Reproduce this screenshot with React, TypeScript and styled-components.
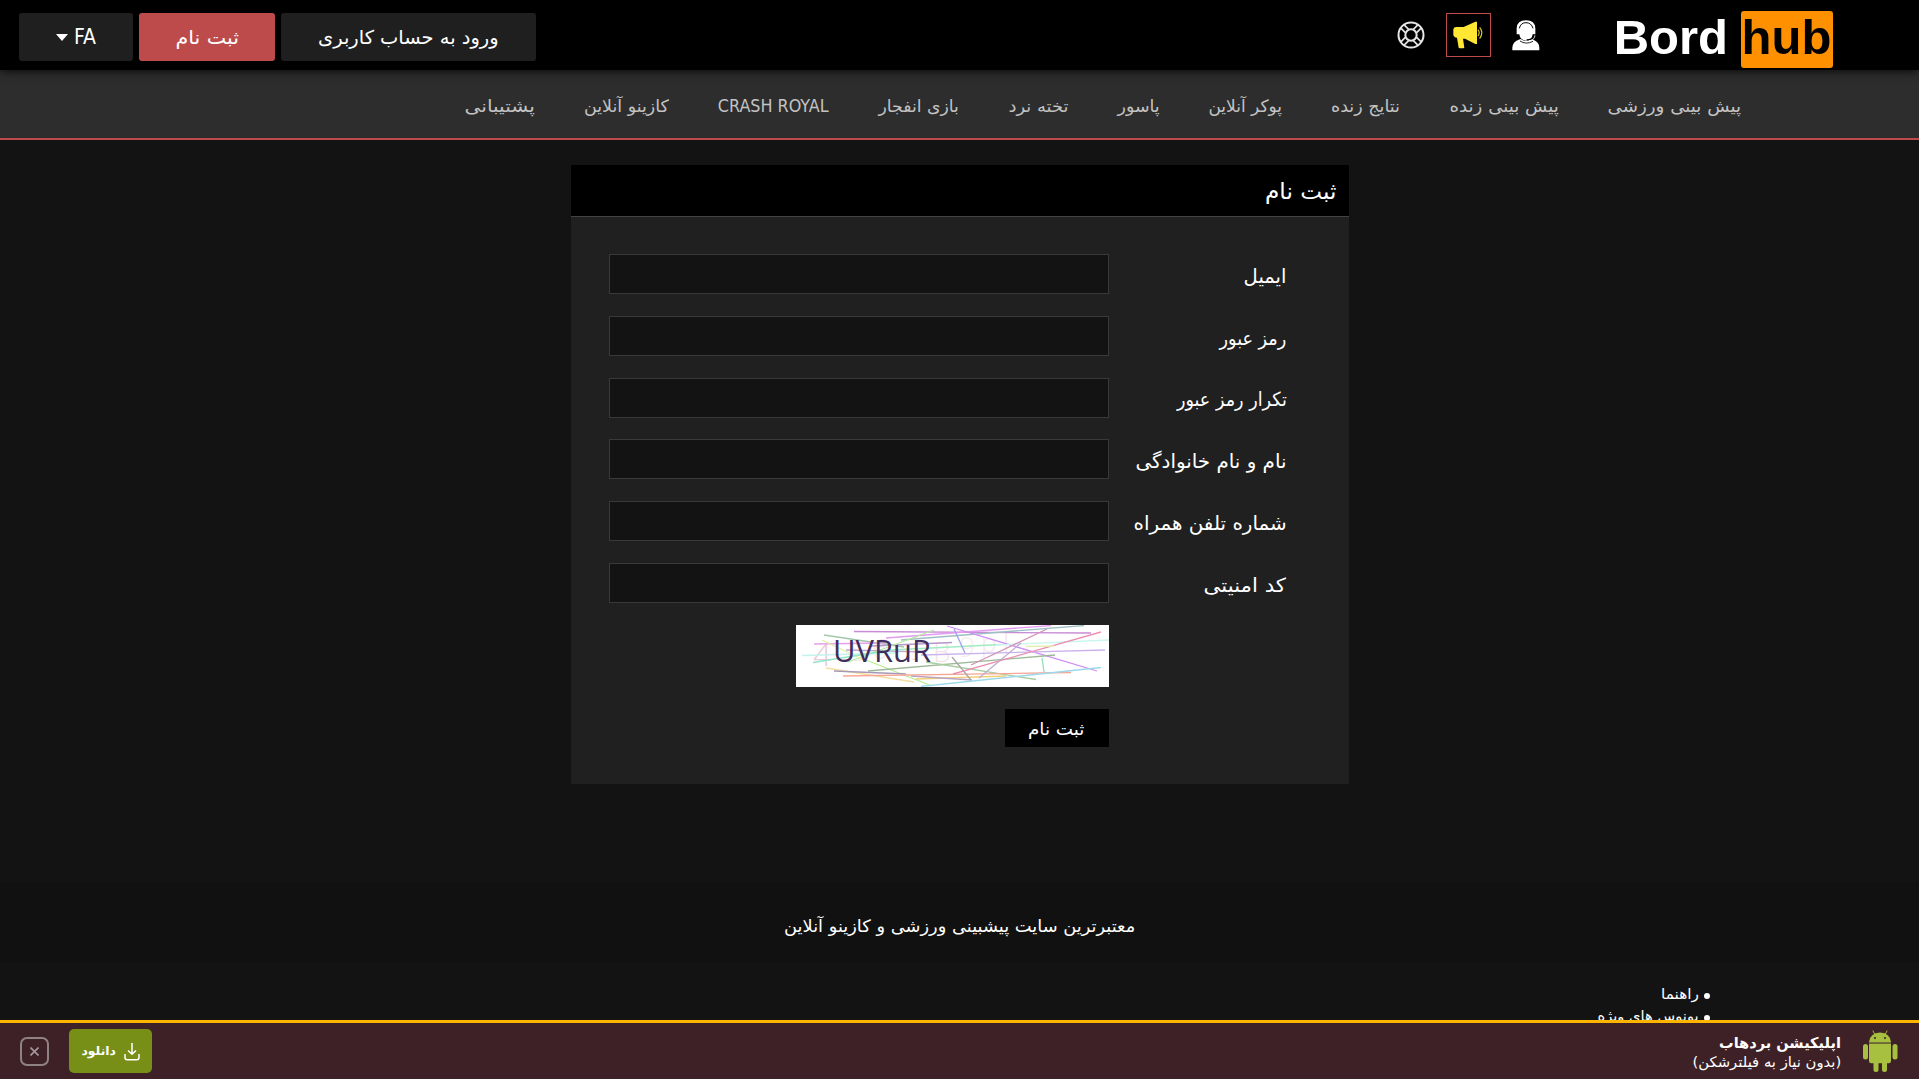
import React, { useLayoutEffect, useRef, useState } from 'react';
import styled, { createGlobalStyle } from 'styled-components';

const GlobalStyle = createGlobalStyle`
  * { box-sizing: border-box; }
  html, body { margin: 0; background: #131313; overflow: hidden; }
  body { font-family: 'DejaVu Sans', 'Noto Sans', sans-serif; color: #fff; }
  button, input { font-family: inherit; }
`;

const Page = styled.div`
  height: 1079px;
  overflow: hidden;
  display: flex;
  flex-direction: column;
`;

/* ---------- fitted text ---------- */

const FitBox = styled.span<{ $w: number; $size: number; $bold?: boolean; $dy?: number }>`
  display: inline-flex;
  justify-content: center;
  flex: none;
  width: ${p => p.$w}px;
  margin-top: ${p => p.$dy ?? 0}px;
  font-size: ${p => p.$size}px;
  font-weight: ${p => (p.$bold ? 700 : 400)};
  line-height: 1.35;
  white-space: nowrap;
`;
const FitInner = styled.span`
  flex: none;
  transform-origin: center;
`;

type FitProps = { w: number; size: number; bold?: boolean; dy?: number; children: string };

/* Keeps a label at a fixed width whatever the metrics of the installed font. */
function Fit({ w, size, bold, dy, children }: FitProps) {
  const ref = useRef<HTMLSpanElement>(null);
  const [ratio, setRatio] = useState(1);
  useLayoutEffect(() => {
    if (ref.current) setRatio(w / ref.current.offsetWidth);
  }, [w, size, children]);
  return (
    <FitBox $w={w} $size={size} $bold={bold} $dy={dy}>
      <FitInner ref={ref} style={{ transform: `scaleX(${ratio})` }}>{children}</FitInner>
    </FitBox>
  );
}

/* ---------- header ---------- */

const Header = styled.header`
  position: relative;
  z-index: 2;
  flex: none;
  height: 70px;
  padding: 0 86px 0 19px;
  display: flex;
  justify-content: space-between;
  background: #000;
  box-shadow: 0 0 10px #000;
`;
const HeaderStart = styled.div`
  display: flex;
  align-items: flex-start;
`;
const Logo = styled.a`
  display: flex;
  align-items: flex-start;
  gap: 13px;
  padding-top: 11px;
  font: 700 49px/52px 'Liberation Sans', sans-serif;
  direction: ltr;
`;
const LogoMark = styled.span`
  display: flex;
  justify-content: center;
  width: 92px;
  height: 57px;
  padding-right: 1px;
  border-radius: 3px;
  background: #ff9000;
  color: #000;
`;
const Icons = styled.div`
  display: flex;
  align-items: center;
  gap: 14px;
  height: 70px;
  margin-right: 67px;
`;
const IconLink = styled.a<{ $framed?: boolean }>`
  display: flex;
  align-items: center;
  justify-content: center;
  width: ${p => (p.$framed ? 45 : 42)}px;
  height: 44px;
  border: 1px solid ${p => (p.$framed ? '#bd4b4b' : 'transparent')};
`;
const Actions = styled.div`
  display: flex;
  gap: 6px;
  padding-top: 13px;
`;
const ActionButton = styled.button<{ $w: number; $accent?: boolean }>`
  display: flex;
  align-items: center;
  justify-content: center;
  gap: 6px;
  width: ${p => p.$w}px;
  height: 48px;
  padding: 0;
  border: 0;
  border-radius: 3px;
  color: #fff;
  background: ${p => (p.$accent ? '#bd4b4b' : '#1f1f1f')};
`;
const Lang = styled.span`
  margin-bottom: 1px;
  font: 21px/24px 'DejaVu Sans Condensed', 'DejaVu Sans', sans-serif;
  font-stretch: condensed;
`;
const Caret = styled.i`
  border: 6px solid transparent;
  border-top: 7px solid #fff;
  border-bottom: 0;
`;

const AgentIcon = () => (
  <svg width="28" height="31" viewBox="364 35 84 93">
    <path d="M365 126V118Q366 100 384 94L390 92Q407 104 421 92L428 94Q446 101 446 118V126Z" fill="#fff" />
    <path d="M378 78V60Q379 36 406 36Q433 36 434 60V78H426Q424 96 406 97Q388 96 386 78Z" fill="#fff" />
    <path d="M386 60Q390 43 406 43Q422 43 427 60" fill="none" stroke="#000" strokeWidth="3" />
    <path d="M430 79Q427 96 408 94" fill="none" stroke="#000" strokeWidth="3.5" />
    <path d="M433 81Q430 98 413 99" fill="none" stroke="#fff" strokeWidth="2.5" />
    <path d="M388 98Q406 110 427 99" fill="none" stroke="#000" strokeWidth="2.5" />
  </svg>
);
const HornIcon = () => (
  <svg width="31" height="29" viewBox="188 40 93 87">
    <path d="M189 65Q190 58 198 58H220L255 42H260V109H255L224 93H218L222 120L219 122H208L205 120L200 90Q190 89 189 81Z" fill="#ffe733" />
    <path d="M263 66Q270 75 263 85M268 59Q281 75 268 93" fill="none" stroke="#d9c62c" strokeWidth="3.5" />
  </svg>
);
const BuoyIcon = () => (
  <svg width="28" height="28" viewBox="-42 -42 84 84" fill="none" stroke="#e6e6e6">
    <circle r="37.5" strokeWidth="6" />
    <circle r="17" strokeWidth="6" />
    {[45, 135, 225, 315].map(a => (
      <path key={a} d="M16 -7H36M16 7H36" strokeWidth="5" transform={`rotate(${a})`} />
    ))}
  </svg>
);

/* ---------- navigation ---------- */

const Nav = styled.nav`
  flex: none;
  height: 70px;
  display: flex;
  align-items: center;
  gap: 49.1px;
  padding-right: 177.500px;
  background: #2d2d2d;
  border-bottom: 2px solid #bd4b4b;
  color: #c3c3c3;
`;
const Latin = styled.span`
  width: 112px;
  margin-top: 3px;
  font: 17.8px/24px 'DejaVu Sans Condensed', 'DejaVu Sans', sans-serif;
  font-stretch: condensed;
  white-space: nowrap;
  direction: ltr;
`;

const navItems = [
  { label: 'پیش بینی ورزشی', w: 134 },
  { label: 'پیش بینی زنده', w: 109 },
  { label: 'نتایج زنده', w: 69 },
  { label: 'پوکر آنلاین', w: 74 },
  { label: 'پاسور', w: 42 },
  { label: 'تخته نرد', w: 60 },
  { label: 'بازی انفجار', w: 80 },
  { label: 'CRASH ROYAL', w: 112, latin: true },
  { label: 'کازینو آنلاین', w: 85 },
  { label: 'پشتیبانی', w: 70 },
];

/* ---------- sign-up card ---------- */

const Card = styled.section`
  flex: none;
  align-self: center;
  width: 778px;
  height: 619px;
  margin-top: 25px;
  background: #202020;
`;
const CardTitle = styled.h1`
  display: flex;
  align-items: center;
  height: 52px;
  margin: 0;
  padding-right: 12px;
  background: #000;
  border-bottom: 1px solid #444;
`;
const Form = styled.form`
  display: flex;
  flex-direction: column;
  gap: 21.8px;
  padding: 37px 62px 0 38px;
`;
const Field = styled.label`
  display: grid;
  grid-template-columns: 178px 500px;
  align-items: center;
  height: 40px;
`;
const Input = styled.input`
  height: 40px;
  padding: 0 10px;
  border: 1px solid #393939;
  border-radius: 0;
  background: #131313;
  color: #fff;
  font-size: 16px;
  outline: none;
`;
const CaptchaFrame = styled.div`
  display: flex;
  width: 313px;
  height: 62px;
  margin-right: 178px;
  background: #fff;
`;
const Submit = styled.button`
  display: flex;
  align-items: center;
  justify-content: center;
  width: 104px;
  height: 38px;
  margin-right: 178px;
  padding: 0;
  border: 0;
  background: #000;
  color: #fff;
`;

const fields = [
  { label: 'ایمیل', w: 43, type: 'text' },
  { label: 'رمز عبور', w: 67, type: 'password' },
  { label: 'تکرار رمز عبور', w: 110, type: 'password' },
  { label: 'نام و نام خانوادگی', w: 151, type: 'text' },
  { label: 'شماره تلفن همراه', w: 153, type: 'text' },
  { label: 'کد امنیتی', w: 83, type: 'text' },
];

const captchaLines: [number, number, number, number, string][] = [
  [58, 6.5, 295, 8, '#c98bd6'],
  [90, 13, 255, 0.5, '#e39af0'],
  [105, 15, 288, 0.5, '#9dbfc4'],
  [151, 1, 301, 46, '#cf8bf5'],
  [28, 10, 108, 22, '#a3c7ab'],
  [18, 19, 90, 18, '#e6a0ec'],
  [75, 21, 156, 17.5, '#b59acb'],
  [50, 25, 130, 27, '#c3a8d4'],
  [52, 37, 138, 5, '#b4eca0'],
  [26, 15, 70, 36, '#ddf0a0'],
  [70, 35, 136, 61, '#b9ec8c'],
  [6, 30.5, 100, 28, '#c4f3ee'],
  [17, 37.5, 95, 25, '#8fe6c9'],
  [95, 25, 205, 19.5, '#a0ecc0'],
  [200, 20, 313, 15, '#c9f6ee'],
  [125, 30, 309, 25, '#c9b3ea'],
  [72, 46, 259, 30, '#9cb896'],
  [130, 37, 240, 54.5, '#a6cda0'],
  [30, 43, 118, 57, '#f5dda0'],
  [38, 46, 110, 49, '#a798b8'],
  [47, 51, 275, 47.5, '#f7a696'],
  [120, 54, 210, 51, '#f3cf78'],
  [115, 51, 176, 55, '#b9a4c4'],
  [125, 61.5, 305, 42.5, '#9bd9ea'],
  [157, 49, 305, 7, '#ec8fb0'],
  [175, 40, 251, 4, '#d295b8'],
  [158, 4, 169, 28, '#9aa5f0'],
  [156, 32, 175, 55, '#a8a8a8'],
  [183, 53, 225, 18, '#bcaacf'],
  [246, 33, 248, 47, '#93dfba'],
  [230, 21.5, 258, 21, '#e5eeb0'],
];
const captchaGhosts: [string, number, number, number, number][] = [
  ['4', 17, 41, 32, 0.28],
  ['S', 54, 36, 30, 0.13],
  ['6', 76, 34, 28, 0.11],
  ['j', 117, 29, 26, 0.16],
  ['B', 137, 37, 28, 0.14],
  ['9', 163, 32, 28, 0.1],
  ['p', 185, 27, 26, 0.12],
  ['l', 207, 27, 28, 0.12],
];

const Captcha = () => (
  <svg width="313" height="62" viewBox="0 0 313 62" fontFamily="'Open Sans', 'Noto Sans', sans-serif" direction="ltr">
    {captchaGhosts.map(([c, x, y, s, o]) => (
      <text key={c + x} x={x} y={y} fontSize={s} fontWeight="300" fill="#b0406a" opacity={o}>{c}</text>
    ))}
    {captchaLines.map(([x1, y1, x2, y2, c], i) => (
      <line key={i} x1={x1} y1={y1} x2={x2} y2={y2} stroke={c} strokeWidth="1.3" />
    ))}
    <text x="37" y="37" fontSize="30.5" fill="#402d5c" textLength="98" lengthAdjust="spacingAndGlyphs">UVRuR</text>
  </svg>
);

/* ---------- footer ---------- */

const Footer = styled.footer`
  flex: 1;
  display: flex;
  flex-direction: column;
  margin-top: 98px;
`;
const Slogan = styled.p`
  display: flex;
  justify-content: center;
  height: 80px;
  margin: 0;
  padding-top: 33px;
  background: #111;
`;
const FooterLinks = styled.ul`
  display: flex;
  flex-direction: column;
  margin: 21.500px 209px 0 0;
  padding: 0;
  list-style: none;
`;
const FooterLink = styled.li`
  display: flex;
  align-items: center;
  gap: 5px;
  height: 22px;
  &::before {
    content: '';
    width: 6px;
    height: 6px;
    margin-top: 2px;
    border-radius: 50%;
    background: #fff;
  }
`;

/* ---------- app bar ---------- */

const AppBar = styled.aside`
  position: fixed;
  z-index: 3;
  right: 0;
  bottom: 0;
  left: 0;
  height: 59px;
  display: flex;
  justify-content: space-between;
  padding: 0 20px;
  border-top: 3px solid #ffb400;
  background: #3e2126;
`;
const AppInfo = styled.div`
  display: flex;
  gap: 21px;
  padding: 7px 1px 0 0;
`;
const AppText = styled.div`
  display: flex;
  flex-direction: column;
`;
const AppActions = styled.div`
  display: flex;
  gap: 20px;
  padding-top: 6px;
`;
const Download = styled.button`
  display: flex;
  align-items: center;
  justify-content: center;
  gap: 8px;
  width: 83px;
  height: 44px;
  padding: 0;
  border: 0;
  border-radius: 5px;
  background: #778f17;
  color: #fff;
`;
const Close = styled.button`
  display: flex;
  align-items: center;
  justify-content: center;
  width: 29px;
  height: 29px;
  margin: 8px 0 0;
  padding: 0;
  border: 2px solid #8f8283;
  border-radius: 7px;
  background: none;
`;

const AndroidIcon = () => (
  <svg width="36" height="42" viewBox="0 0 36 42" fill="#a8c03f">
    <path d="M7 12Q8 3 18 2.5Q28 3 29 12Z" />
    <path d="M11 1L13.2 5M25 1L22.8 5" stroke="#a8c03f" strokeWidth="1" strokeLinecap="round" />
    <path d="M7 13.8H29V31Q29 33.3 26.7 33.3H9.3Q7 33.3 7 31Z" />
    <rect x="1" y="14" width="5" height="15.5" rx="2.5" />
    <rect x="30.5" y="14" width="5" height="15.5" rx="2.5" />
    <path d="M11.5 32H16.5V39.5Q16.5 42 14 42Q11.5 42 11.5 39.5ZM20 32H25V39.5Q25 42 22.5 42Q20 42 20 39.5Z" />
    <circle cx="13" cy="8" r="1" fill="#3e2126" />
    <circle cx="23" cy="8" r="1" fill="#3e2126" />
    <path d="M7 12H29V13.8H7Z" fill="#75713a" />
  </svg>
);
const DownloadIcon = () => (
  <svg width="16" height="19" viewBox="0 0 16 19" fill="none" stroke="#fff" strokeWidth="1.5">
    <path d="M8 1V12M4 8.5L8 12.3L12 8.5M1 12V15.5Q1 17.7 3.2 17.7H12.8Q15 17.7 15 15.5V12" />
  </svg>
);

export default function App() {
  return (
    <Page dir="rtl">
      <GlobalStyle />
      <Header>
        <HeaderStart>
          <Logo>
            <span>Bord</span>
            <LogoMark>hub</LogoMark>
          </Logo>
          <Icons>
            <IconLink><AgentIcon /></IconLink>
            <IconLink $framed><HornIcon /></IconLink>
            <IconLink><BuoyIcon /></IconLink>
          </Icons>
        </HeaderStart>
        <Actions>
          <ActionButton $w={255}><Fit w={181} size={19} dy={1}>ورود به حساب کاربری</Fit></ActionButton>
          <ActionButton $w={136} $accent><Fit w={64} size={19} dy={1}>ثبت نام</Fit></ActionButton>
          <ActionButton $w={114}>
            <Lang>FA</Lang>
            <Caret />
          </ActionButton>
        </Actions>
      </Header>
      <Nav>
        {navItems.map(item => item.latin
          ? <Latin key={item.label}>{item.label}</Latin>
          : <Fit key={item.label} w={item.w} size={17} dy={5}>{item.label}</Fit>)}
      </Nav>
      <Card>
        <CardTitle><Fit w={71} size={22.5} dy={2}>ثبت نام</Fit></CardTitle>
        <Form>
          {fields.map(f => (
            <Field key={f.label}>
              <Fit w={f.w} size={19.5} dy={6}>{f.label}</Fit>
              <Input type={f.type} />
            </Field>
          ))}
          <CaptchaFrame><Captcha /></CaptchaFrame>
          <Submit type="button"><Fit w={56} size={17} dy={3}>ثبت نام</Fit></Submit>
        </Form>
      </Card>
      <Footer>
        <Slogan><Fit w={351} size={17}>معتبرترین سایت پیشبینی ورزشی و کازینو آنلاین</Fit></Slogan>
        <FooterLinks>
          <FooterLink><Fit w={38} size={14.5}>راهنما</Fit></FooterLink>
          <FooterLink><Fit w={101} size={14.5}>بونوس های ویژه</Fit></FooterLink>
        </FooterLinks>
      </Footer>
      <AppBar>
        <AppInfo>
          <AndroidIcon />
          <AppText>
            <Fit w={122} size={14.8} bold dy={3}>اپلیکیشن بردهاب</Fit>
            <Fit w={149} size={14.5}>(بدون نیاز به فیلترشکن)</Fit>
          </AppText>
        </AppInfo>
        <AppActions>
          <Download>
            <DownloadIcon />
            <Fit w={34} size={12} bold dy={1}>دانلود</Fit>
          </Download>
          <Close>
            <svg width="9" height="9" viewBox="0 0 9 9" stroke="#a59a9b" strokeWidth="1.6">
              <path d="M.5 .5L8.5 8.5M8.5 .5L.5 8.5" />
            </svg>
          </Close>
        </AppActions>
      </AppBar>
    </Page>
  );
}
